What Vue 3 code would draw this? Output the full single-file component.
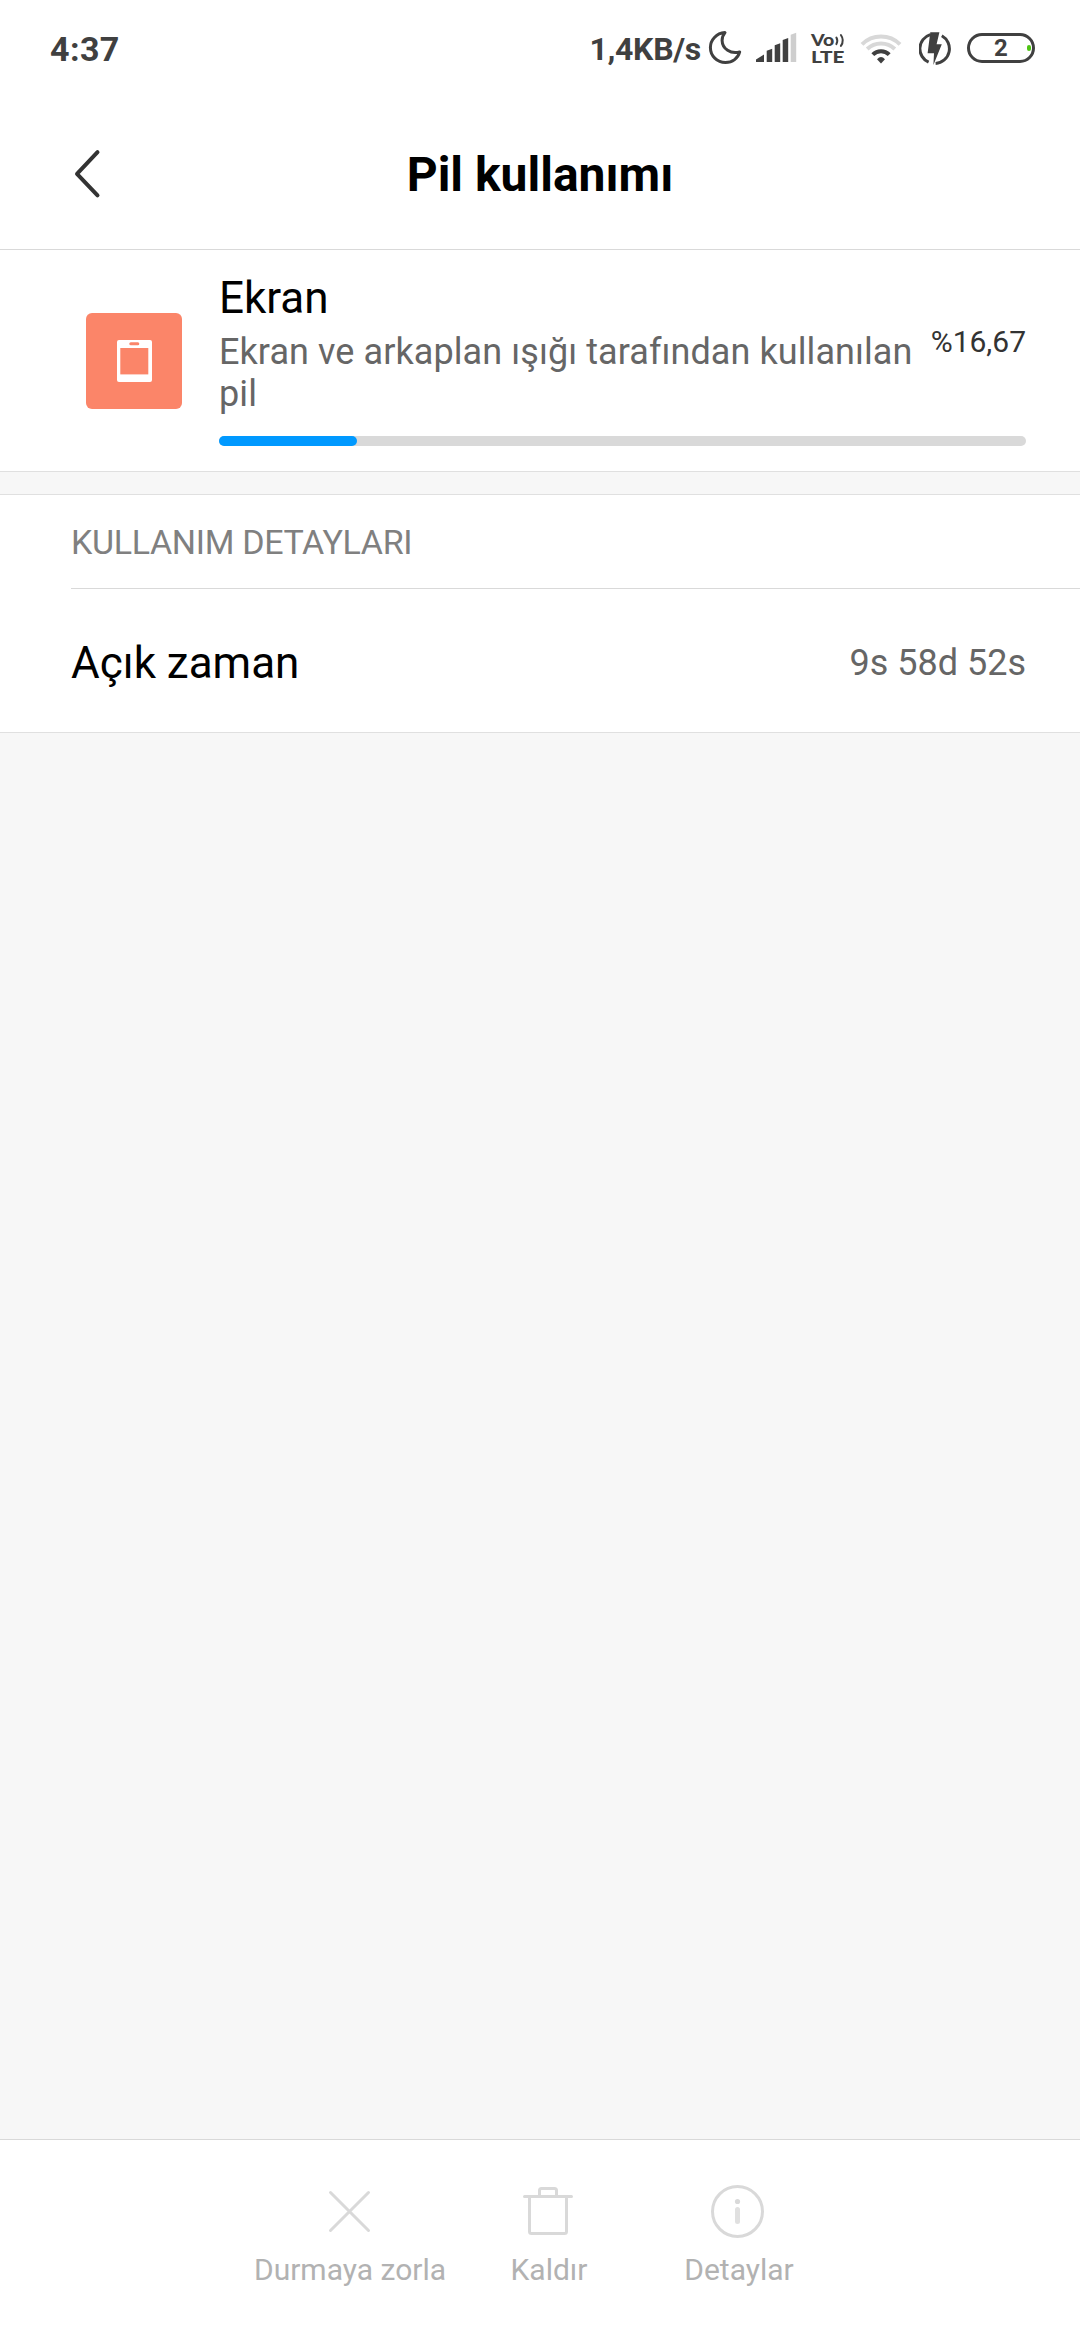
<template>
  <div class="page">
    <header class="top">
      <div class="status">
        <span class="time">4:37</span>
        <div class="status-right">
          <span class="speed">1,4KB/s</span>
          <svg class="moon" width="35" height="36" viewBox="0 0 35 36">
            <path d="M17 2.6C8.3 3.3 2.4 9.8 2.4 17.5c0 8.4 6.6 15 15.1 15 7 0 12.5-4.2 14.2-10.6-9 2.6-17.4-3-17.6-11.4-.1-3 1.1-5.7 2.9-7.9z" />
          </svg>
          <svg class="signal" width="42" height="30" viewBox="0 0 42 30">
            <path d="M1 27.5L9 22.5V30H1zM11.7 18.8L17.2 16.8V30H11.7zM19.7 13.3L25.2 11.3V30H19.7zM27.7 7.9L33.2 5.9V30H27.7z" fill="#404040" />
            <path d="M35.7 2.7L41.2.7V30H35.7z" fill="#cecece" />
          </svg>
          <svg class="volte" width="36" height="34" viewBox="0 0 36 34">
            <text x="1" y="13.8" textLength="23.4" lengthAdjust="spacingAndGlyphs" font-size="16.5">Vo</text>
            <text x="1" y="30.7" textLength="33.5" lengthAdjust="spacingAndGlyphs" font-size="17">LTE</text>
            <path d="M26.4 5.6q1.800 3.200 0 6.500M30.900 3q3.800 5.400 0 10.900" />
          </svg>
          <svg class="wifi" width="44" height="34" viewBox="0 0 44 34">
            <path d="M3 12.3a27 27 0 0 1 38 0M8.2 17a20 20 0 0 1 27.6 0" stroke="#d8d8d8" />
            <path d="M13.8 22.6a11.5 11.5 0 0 1 16.4 0" stroke="#404040" />
            <path d="M18 27.2q4-4.4 8 0l-4 4.2z" fill="#404040" />
          </svg>
          <svg class="charge" width="32" height="34" viewBox="0 0 32 34">
            <path d="M11.2 2.6A14.8 14.8 0 0 0 9.6 30.2M22.8 3.8A14.8 14.8 0 0 1 16.6 31.5" fill="none" stroke="#404040" stroke-width="3" />
            <path d="M11.3.3H20.4L17.6 12.3H22.8L14.4 33L15 21.3H8.6z" fill="#404040" />
          </svg>
          <div class="battery">
            <span>{{ battery }}</span>
            <i class="level"></i>
          </div>
        </div>
      </div>
      <div class="nav">
        <svg class="back" width="30" height="52" viewBox="0 0 30 52">
          <path d="M25.500 4.200L5 25.800L25.500 47.300" />
        </svg>
        <h1>Pil kullanımı</h1>
      </div>
    </header>

    <section class="usage">
      <div class="app-icon">
        <svg width="36" height="44" viewBox="0 0 36 44">
          <rect x="1" y="1" width="35" height="42" rx="2" fill="#fff" />
          <rect x="13.3" y="3.3" width="10" height="3" rx="1.5" fill="#fb8569" />
          <rect x="4.3" y="9" width="28" height="26.4" fill="#fb8569" />
        </svg>
      </div>
      <div class="usage-body">
        <div class="name">Ekran</div>
        <div class="usage-row">
          <p class="desc">Ekran ve arkaplan ışığı tarafından kullanılan pil</p>
          <span class="percent">%16,67</span>
        </div>
        <div class="bar">
          <div class="bar-fill" :style="{ width: barWidth }"></div>
        </div>
      </div>
    </section>

    <section class="details">
      <h2>KULLANIM DETAYLARI</h2>
      <div class="detail-row">
        <span class="label">Açık zaman</span>
        <span class="value">9s 58d 52s</span>
      </div>
    </section>

    <footer class="actions">
      <div v-for="item in actions" :key="item.icon" class="action">
        <svg width="60" height="60" viewBox="0 0 60 60">
          <path v-if="item.icon === 'close'" d="M11.5 10.5L49.5 48.5M49.5 10.5L11.5 48.5" />
          <g v-else-if="item.icon === 'trash'">
            <path d="M6.5 14.5H53.5M11.5 14.5V49.5q0 2 2 2H46.5q2 0 2-2V14.5" />
            <path d="M21.5 14.5V8.5q0-2 2-2H36.5q2 0 2 2V14.5" />
          </g>
          <g v-else>
            <circle cx="29.5" cy="29.5" r="25" />
            <circle class="dot" cx="29.5" cy="19.5" r="2.6" />
            <path class="stem" d="M29.5 27.5V39.5" />
          </g>
        </svg>
        <span>{{ item.text }}</span>
      </div>
    </footer>
  </div>
</template>

<script setup>
import { ref, computed } from 'vue';

const battery = ref(2);
const usedWidth = ref(138);
const totalWidth = 807;
const barWidth = computed(() => (usedWidth.value / totalWidth) * 100 + '%');

const actions = [
  { icon: 'close', text: 'Durmaya zorla' },
  { icon: 'trash', text: 'Kaldır' },
  { icon: 'info', text: 'Detaylar' },
];
</script>

<style>
body {
  margin: 0;
  background: #f7f7f7;
}
</style>

<style scoped>
.page {
  display: flex;
  flex-direction: column;
  width: 1080px;
  height: 2340px;
  background: #f7f7f7;
  font-family: Roboto, "Noto Sans", sans-serif;
  color: #000;
}
svg {
  display: block;
  flex: none;
}
.top {
  box-sizing: border-box;
  height: 250px;
  background: #fff;
  border-bottom: 1px solid #d9d9d9;
}
.status {
  display: flex;
  justify-content: space-between;
  align-items: center;
  height: 98px;
  padding: 0 45px 0 50px;
  color: #404040;
  font-weight: 700;
}
.time {
  font-size: 34px;
  line-height: 40px;
  letter-spacing: 0.4px;
}
.status-right {
  display: flex;
  align-items: center;
}
.speed {
  font-size: 32px;
  line-height: 38px;
  letter-spacing: -0.3px;
}
.moon {
  margin: 0 0 2px 7px;
}
.moon path {
  fill: none;
  stroke: #404040;
  stroke-width: 3;
  stroke-linejoin: round;
}
.signal {
  margin: 0 0 4px 12px;
}
.volte {
  margin-left: 13px;
  overflow: visible;
}
.volte text {
  font-family: Lato, sans-serif;
  font-weight: 900;
  fill: #404040;
}
.volte path {
  fill: none;
  stroke: #404040;
  stroke-width: 2;
  stroke-linecap: round;
}
.wifi {
  margin-left: 13px;
}
.wifi path[stroke] {
  fill: none;
  stroke-width: 4;
}
.charge {
  margin-left: 16px;
}
.battery {
  position: relative;
  box-sizing: border-box;
  width: 68px;
  height: 30px;
  margin: 0 0 2px 16px;
  border: 3px solid #404040;
  border-radius: 15px;
  font-size: 24px;
  line-height: 24px;
  text-align: center;
}
.level {
  position: absolute;
  top: 9px;
  right: 1.5px;
  width: 4px;
  height: 6px;
  border-radius: 2px;
  background: #4fc414;
}
.nav {
  display: grid;
  grid-template-columns: 72px 1fr 72px;
  align-items: center;
  height: 151px;
}
.back {
  margin: 0 0 0 72px;
}
.back path {
  fill: none;
  stroke: #333;
  stroke-width: 4;
  stroke-linecap: round;
  stroke-linejoin: round;
}
h1 {
  margin: 2px 0 0;
  font-size: 48px;
  line-height: 56px;
  font-weight: 700;
  text-align: center;
}
.usage {
  display: flex;
  box-sizing: border-box;
  height: 222px;
  padding: 22px 54px 0 86px;
  background: #fff;
  border-bottom: 1px solid #e0e0e0;
}
.app-icon {
  display: flex;
  align-items: center;
  justify-content: center;
  width: 96px;
  height: 96px;
  margin: 41px 37px 0 0;
  border-radius: 6px;
  background: #fb8569;
}
.usage-body {
  flex: 1;
}
.name {
  font-size: 44px;
  line-height: 52px;
}
.usage-row {
  display: flex;
  justify-content: space-between;
  margin-top: 7px;
}
.desc {
  width: 700px;
  margin: 0;
  font-size: 36px;
  line-height: 42px;
  letter-spacing: 0.08px;
  color: #666;
}
.percent {
  font-size: 30px;
  line-height: 35px;
  margin-top: -7px;
  color: #333;
}
.bar {
  height: 10px;
  margin-top: 21px;
  border-radius: 5px;
  background: #d9d9d9;
}
.bar-fill {
  height: 10px;
  border-radius: 5px;
  background: #0099ff;
}
.details {
  box-sizing: border-box;
  height: 239px;
  margin-top: 22px;
  padding-left: 71px;
  background: #fff;
  border-top: 1px solid #e0e0e0;
  border-bottom: 1px solid #e0e0e0;
}
h2 {
  margin: 0;
  padding-top: 1px;
  font-size: 34px;
  line-height: 92px;
  font-weight: 400;
  letter-spacing: -0.33px;
  color: #808080;
  border-bottom: 1px solid #d9d9d9;
}
.detail-row {
  display: flex;
  justify-content: space-between;
  align-items: center;
  box-sizing: border-box;
  height: 143px;
  padding: 5px 54px 0 0;
}
.label {
  font-size: 44px;
  line-height: 52px;
}
.value {
  font-size: 36px;
  line-height: 42px;
  color: #666;
}
.actions {
  display: grid;
  grid-template-columns: 218px 180px 200px;
  box-sizing: border-box;
  height: 201px;
  margin-top: auto;
  padding: 42px 0 0 240px;
  background: #fff;
  border-top: 1px solid #d9d9d9;
}
.action {
  display: flex;
  flex-direction: column;
  align-items: center;
  font-size: 30px;
  line-height: 35px;
  color: #b2b2b2;
}
.action svg {
  margin-bottom: 10px;
  fill: none;
  stroke: #d9d9d9;
  stroke-width: 3;
  stroke-linecap: round;
  stroke-linejoin: round;
}
.action span {
  padding-left: 2px;
}
.action .dot {
  fill: #d9d9d9;
  stroke: none;
}
.action .stem {
  stroke: #e0e0e0;
  stroke-width: 5;
}
</style>
